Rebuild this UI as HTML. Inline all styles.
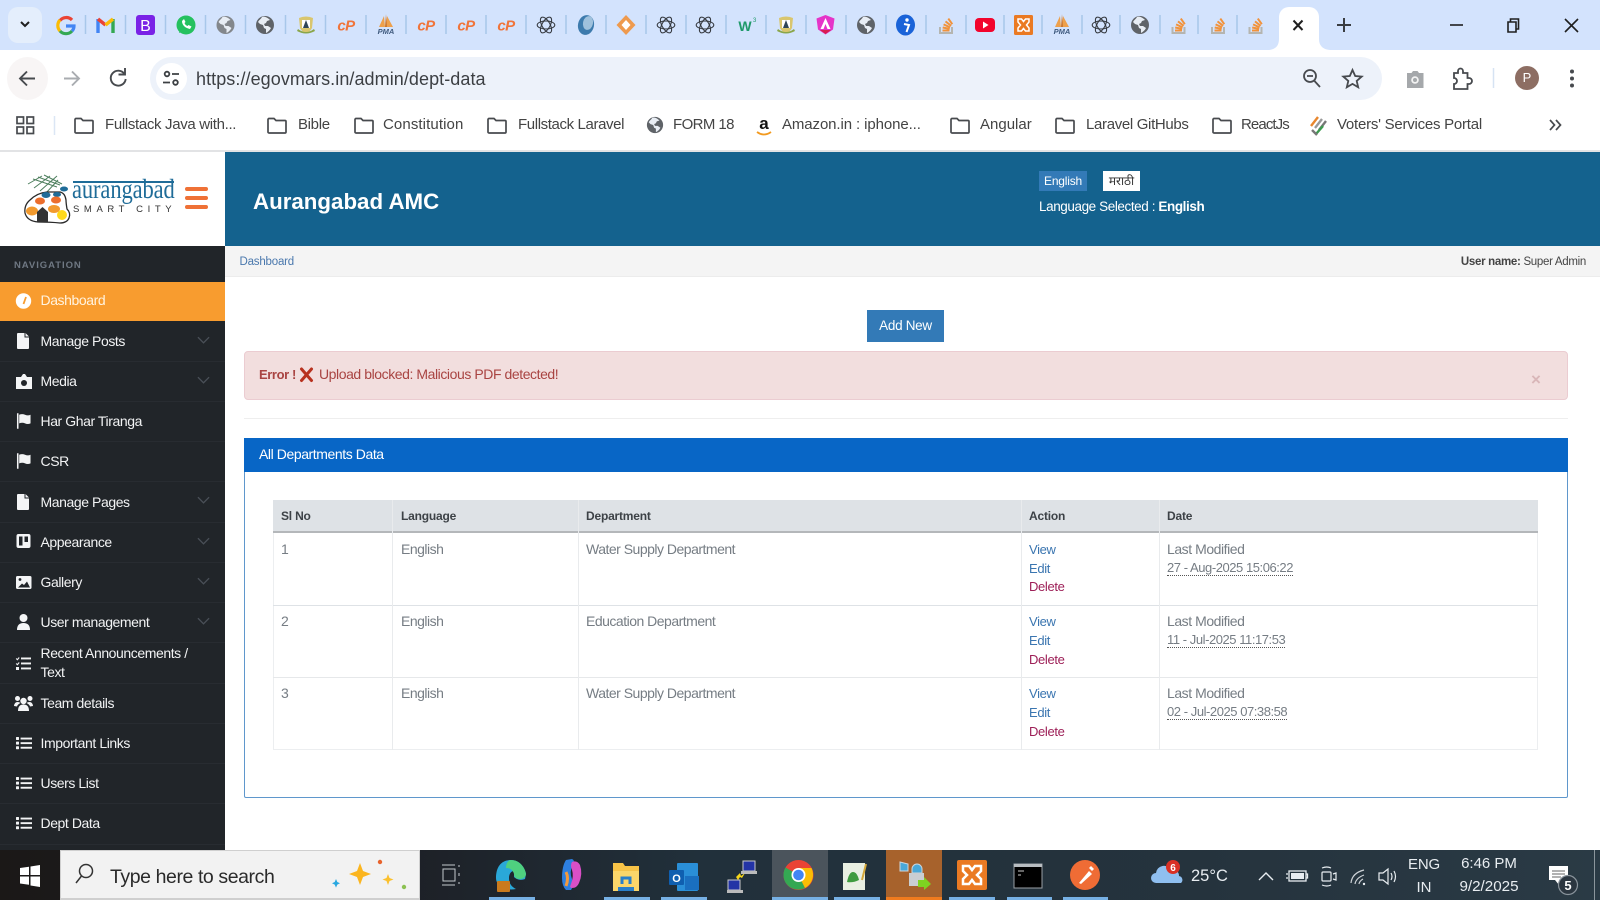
<!DOCTYPE html>
<html lang="en"><head><meta charset="utf-8"><title>Dept Data</title>
<style>
*{box-sizing:border-box;margin:0;padding:0}
html,body{width:1600px;height:900px;overflow:hidden;background:#fff;font-family:"Liberation Sans",Arial,sans-serif}
#p{position:relative;width:1600px;height:900px;overflow:hidden}
.a{position:absolute}
.t{position:absolute;white-space:nowrap;line-height:20px;height:20px}
.bm{font-size:15px;color:#444;top:115px;letter-spacing:-.33px}
.nav{font-size:14px;color:#f2f3f4;left:40.5px;letter-spacing:-.42px}
.sep{position:absolute;left:0;width:225px;height:1px;background:#282c31}
.td{font-size:14px;color:#767d84;letter-spacing:-.5px}
.th{font-size:12px;font-weight:bold;color:#3d4247;letter-spacing:-.2px}
.lk{font-size:13px;color:#3a75b0;left:1029px;letter-spacing:-.35px}
.dl{font-size:13px;color:#9d1f57;left:1029px;letter-spacing:-.35px}
.dt{font-size:14px;color:#767d84;left:1167px;letter-spacing:-.45px}
.ds{font-size:13px;color:#767d84;left:1167px;letter-spacing:-.45px}
.ds span{border-bottom:1px dotted #555;display:inline-block;line-height:15px}
.tb{color:#e8edf1}
svg.o{position:absolute;left:0;top:0;z-index:5}
</style></head><body><div id="p">

<!-- browser chrome -->
<div class="a" style="left:0;top:0;width:1600px;height:50px;background:#d3e3fd"></div>
<div class="a" style="left:8px;top:7px;width:34px;height:36px;border-radius:10px;background:#e4eefc"></div>
<div class="a" style="left:0;top:50px;width:1600px;height:102px;background:#fff;border-radius:10px 10px 0 0"></div>
<div class="a" style="left:1279px;top:7px;width:40px;height:44px;background:#fff;border-radius:10px 10px 0 0"></div>
<div class="a" style="left:7px;top:57px;width:41px;height:43px;border-radius:50%;background:#f8f5f5"></div>
<div class="a" style="left:150px;top:57px;width:1232px;height:43px;border-radius:22px;background:#edf2fa"></div>
<div class="a" style="left:156px;top:63px;width:31px;height:31px;border-radius:50%;background:#fff"></div>
<div class="t" style="left:196px;top:69px;font-size:18px;color:#3c3f43;letter-spacing:.07px">https://egovmars.in/admin/dept-data</div>
<div class="a" style="left:0;top:150px;width:1600px;height:2px;background:#e2e3e5"></div>
<div class="a" style="left:1515px;top:66px;width:24px;height:24px;border-radius:50%;background:#8d6e63;color:#fff;font-size:13px;line-height:24px;text-align:center">P</div>

<div class="t bm" style="left:105px">Fullstack Java with...</div>
<div class="t bm" style="left:298px">Bible</div>
<div class="t bm" style="left:383px;letter-spacing:.1px">Constitution</div>
<div class="t bm" style="left:518px;letter-spacing:-.38px">Fullstack Laravel</div>
<div class="t bm" style="left:673px;letter-spacing:-.6px">FORM 18</div>
<div class="t bm" style="left:782px;letter-spacing:-.1px">Amazon.in : iphone...</div>
<div class="t bm" style="left:980px;letter-spacing:0">Angular</div>
<div class="t bm" style="left:1086px">Laravel GitHubs</div>
<div class="t bm" style="left:1241px;letter-spacing:-.9px">ReactJs</div>
<div class="t bm" style="left:1337px;letter-spacing:-.24px">Voters' Services Portal</div>

<!-- logo area -->
<div class="a" style="left:0;top:152px;width:225px;height:94px;background:#fff"></div>
<div class="t" style="left:72px;top:179px;height:24px;line-height:24px;font-family:'Liberation Serif',serif;font-size:22.5px;color:#1f6c98;letter-spacing:-.1px;transform:scaleY(1.2);transform-origin:50% 80%">aurangabad</div>
<div class="a" style="left:73px;top:181px;width:101px;height:1.5px;background:#1f6c98"></div>
<div class="t" style="left:73px;top:200px;font-size:9.5px;color:#333;letter-spacing:4.6px">SMART CITY</div>

<!-- header -->
<div class="a" style="left:225px;top:152px;width:1375px;height:94px;background:#14628e"></div>
<div class="t" style="left:253px;top:187px;height:30px;line-height:30px;font-size:22.3px;font-weight:bold;color:#fff">Aurangabad AMC</div>
<div class="a" style="left:1039px;top:171px;width:48px;height:20px;background:#337ab7;color:#fff;font-size:12px;line-height:20px;text-align:center;letter-spacing:-.2px">English</div>
<div class="a" style="left:1103px;top:171px;width:37px;height:20px;background:#fff;color:#333;font-size:12px;line-height:20px;text-align:center;font-family:'Liberation Sans','Noto Sans Devanagari','Lohit Devanagari',sans-serif">मराठी</div>
<div class="t" style="left:1039px;top:197px;font-size:13.5px;color:#fff;letter-spacing:-.41px">Language Selected : <b>English</b></div>

<!-- breadcrumb -->
<div class="a" style="left:225px;top:246px;width:1375px;height:31px;background:#f4f4f4;border-bottom:1px solid #ececec"></div>
<div class="t" style="left:239.5px;top:252px;font-size:11.5px;color:#4a78ad;letter-spacing:-.2px">Dashboard</div>
<div class="t" style="right:14px;top:252px;font-size:11.5px;color:#444;letter-spacing:-.3px"><b>User name:</b> Super Admin</div>

<!-- sidebar -->
<div class="a" style="left:0;top:246px;width:225px;height:604px;background:#212529"></div>
<div class="t" style="left:14px;top:256px;font-size:9.5px;font-weight:bold;color:#6f7883;letter-spacing:.95px">NAVIGATION</div>
<div class="a" style="left:0;top:281.500px;width:225px;height:39.500px;background:#f89c2f"></div>
<div class="sep" style="top:361px"></div><div class="sep" style="top:401px"></div><div class="sep" style="top:441px"></div><div class="sep" style="top:481px"></div><div class="sep" style="top:522px"></div><div class="sep" style="top:562px"></div><div class="sep" style="top:602px"></div><div class="sep" style="top:642px"></div><div class="sep" style="top:683px"></div><div class="sep" style="top:723px"></div><div class="sep" style="top:763px"></div><div class="sep" style="top:803px"></div><div class="sep" style="top:844px"></div>
<div class="t nav" style="top:290px;color:#fff3e0">Dashboard</div>
<div class="t nav" style="top:331px">Manage Posts</div>
<div class="t nav" style="top:371px">Media</div>
<div class="t nav" style="top:411px">Har Ghar Tiranga</div>
<div class="t nav" style="top:451px">CSR</div>
<div class="t nav" style="top:492px">Manage Pages</div>
<div class="t nav" style="top:532px">Appearance</div>
<div class="t nav" style="top:572px">Gallery</div>
<div class="t nav" style="top:612px">User management</div>
<div class="t nav" style="top:643px">Recent Announcements /</div>
<div class="t nav" style="top:662px">Text</div>
<div class="t nav" style="top:693px">Team details</div>
<div class="t nav" style="top:733px">Important Links</div>
<div class="t nav" style="top:773px">Users List</div>
<div class="t nav" style="top:813px">Dept Data</div>

<!-- main -->
<div class="a" style="left:867px;top:310px;width:77px;height:32px;background:#337ab7;color:#fff;font-size:13.5px;line-height:32px;text-align:center;letter-spacing:-.3px">Add New</div>
<div class="a" style="left:244px;top:351px;width:1324px;height:49px;background:#f2dede;border:1px solid #ebccd1;border-radius:4px"></div>
<div class="t" style="left:259px;top:365px;font-size:13px;font-weight:bold;color:#a94442;letter-spacing:-.4px">Error !</div>
<div class="t" style="left:319px;top:364px;font-size:14px;color:#a94442;letter-spacing:-.43px">Upload blocked: Malicious PDF detected!</div>
<div class="t" style="left:1531px;top:370px;font-size:17px;font-weight:bold;color:#d9b6b8">×</div>
<div class="a" style="left:244px;top:418px;width:1324px;height:1px;background:#eee"></div>

<div class="a" style="left:244px;top:438px;width:1324px;height:360px;border:1px solid #5f97cc;border-radius:2px"></div>
<div class="a" style="left:244px;top:438px;width:1324px;height:34px;background:#0866c6"></div>
<div class="t" style="left:259px;top:444px;font-size:14px;color:#fff;letter-spacing:-.42px">All Departments Data</div>

<div class="a" style="left:273px;top:500px;width:1265px;height:33px;background:#dee2e6;border-bottom:2px solid #b4b7ba"></div>
<div class="a" style="left:273px;top:533px;width:1265px;height:217px;border:1px solid #eceef0;border-top:0"></div>
<div class="a" style="left:273px;top:605px;width:1265px;height:1px;background:#dee2e6"></div>
<div class="a" style="left:273px;top:677px;width:1265px;height:1px;background:#e6e8ea"></div>
<div class="a" style="left:392px;top:500px;width:1px;height:250px;background:#e9ebed"></div>
<div class="a" style="left:578px;top:500px;width:1px;height:250px;background:#e9ebed"></div>
<div class="a" style="left:1021px;top:500px;width:1px;height:250px;background:#e9ebed"></div>
<div class="a" style="left:1159px;top:500px;width:1px;height:250px;background:#e9ebed"></div>
<div class="t th" style="left:281px;top:506px">Sl No</div>
<div class="t th" style="left:401px;top:506px">Language</div>
<div class="t th" style="left:586px;top:506px">Department</div>
<div class="t th" style="left:1029px;top:506px">Action</div>
<div class="t th" style="left:1167px;top:506px">Date</div>

<div class="t td" style="left:281px;top:539px">1</div><div class="t td" style="left:401px;top:539px">English</div><div class="t td" style="left:586px;top:539px">Water Supply Department</div>
<div class="t lk" style="top:540px">View</div><div class="t lk" style="top:559px">Edit</div><div class="t dl" style="top:577px">Delete</div>
<div class="t dt" style="top:539px">Last Modified</div><div class="t ds" style="top:558px"><span>27 - Aug-2025 15:06:22</span></div>

<div class="t td" style="left:281px;top:611px">2</div><div class="t td" style="left:401px;top:611px">English</div><div class="t td" style="left:586px;top:611px">Education Department</div>
<div class="t lk" style="top:612px">View</div><div class="t lk" style="top:631px">Edit</div><div class="t dl" style="top:650px">Delete</div>
<div class="t dt" style="top:611px">Last Modified</div><div class="t ds" style="top:630px"><span>11 - Jul-2025 11:17:53</span></div>

<div class="t td" style="left:281px;top:683px">3</div><div class="t td" style="left:401px;top:683px">English</div><div class="t td" style="left:586px;top:683px">Water Supply Department</div>
<div class="t lk" style="top:684px">View</div><div class="t lk" style="top:703px">Edit</div><div class="t dl" style="top:722px">Delete</div>
<div class="t dt" style="top:683px">Last Modified</div><div class="t ds" style="top:702px"><span>02 - Jul-2025 07:38:58</span></div>

<!-- taskbar -->
<div class="a" style="left:0;top:850px;width:1600px;height:50px;background:linear-gradient(90deg,#1b1817 0,#1d2026 400px,#21303b 700px,#25333d 1200px,#2a3a45 1600px)"></div>
<div class="a" style="left:60px;top:850px;width:360px;height:50px;background:#f2f2f2;border:1px solid #cfcfcf;border-bottom-width:2px"></div>
<div class="t" style="left:110px;top:865px;height:24px;line-height:24px;font-size:19.5px;color:#2a2a2a;letter-spacing:-.42px">Type here to search</div>
<div class="a" style="left:772px;top:850px;width:56px;height:50px;background:#4b545c"></div>
<div class="a" style="left:886px;top:850px;width:56px;height:50px;background:#a7622c"></div>
<div class="a" style="left:489px;top:897px;width:46px;height:3px;background:#76b0e4"></div>
<div class="a" style="left:604px;top:897px;width:46px;height:3px;background:#76b0e4"></div>
<div class="a" style="left:661px;top:897px;width:46px;height:3px;background:#76b0e4"></div>
<div class="a" style="left:772px;top:897px;width:56px;height:3px;background:#76b0e4"></div>
<div class="a" style="left:834px;top:897px;width:46px;height:3px;background:#76b0e4"></div>
<div class="a" style="left:886px;top:897px;width:56px;height:3px;background:#f07b1e"></div>
<div class="a" style="left:949px;top:897px;width:46px;height:3px;background:#76b0e4"></div>
<div class="a" style="left:1007px;top:897px;width:45px;height:3px;background:#76b0e4"></div>
<div class="a" style="left:1063px;top:897px;width:45px;height:3px;background:#76b0e4"></div>
<div class="a" style="left:1594px;top:850px;width:1px;height:50px;background:#8b959c"></div>
<div class="t tb" style="left:1191px;top:865px;height:22px;line-height:22px;font-size:16.5px">25°C</div>
<div class="t tb" style="left:1408px;top:855px;font-size:15px;width:32px;text-align:center;letter-spacing:-.2px">ENG</div>
<div class="t tb" style="left:1408px;top:878px;font-size:15px;width:32px;text-align:center">IN</div>
<div class="t tb" style="left:1449px;top:854px;font-size:15px;width:80px;text-align:center">6:46 PM</div>
<div class="t tb" style="left:1449px;top:877px;font-size:15.2px;width:80px;text-align:center">9/2/2025</div>

<svg class="o" width="1600" height="900" viewBox="0 0 1600 900" fill="none">
<defs>
<symbol id="globe" viewBox="0 0 20 20"><circle cx="10" cy="10" r="9" fill="#5f6368"/><path d="M7 2c-1 2-3 3-4 5l2 2 3 1 1 3 2 1v4c2-1 4-3 5-5l-3-2-3 0-1-2 2-1 1-2 3-1C12 2 9 1 7 2z" fill="#e8edf4"/></symbol>
<symbol id="glb2" viewBox="0 0 20 20"><circle cx="10" cy="10" r="9" fill="#83878c"/><path d="M7 2c-1 2-3 3-4 5l2 2 3 1 1 3 2 1v4c2-1 4-3 5-5l-3-2-3 0-1-2 2-1 1-2 3-1C12 2 9 1 7 2z" fill="#e8edf4"/></symbol>
<symbol id="gpt" viewBox="0 0 20 20"><g stroke="#33373d" stroke-width="1.050"><ellipse cx="10" cy="10" rx="8.800" ry="4"/><ellipse cx="10" cy="10" rx="8.800" ry="4" transform="rotate(60 10 10)"/><ellipse cx="10" cy="10" rx="8.800" ry="4" transform="rotate(120 10 10)"/></g></symbol>
<symbol id="so" viewBox="0 0 20 20"><path d="M4 12v6h12v-6" stroke="#b5b5b0" stroke-width="2"/><g stroke="#f1923b" stroke-width="2"><path d="M6.500 15.500h7"/><path d="M6.700 12.500l7 1.400"/><path d="M7.600 9.400l6.500 3"/><path d="M9.500 6.400l5.600 4.400"/><path d="M12.300 3.600l4 5.600"/></g></symbol>
<symbol id="crest" viewBox="0 0 20 20"><path d="M3 3q7-3 14 0l-1 10q-2 4-6 5-4-1-6-5z" fill="#d9c66e"/><path d="M6 5h8v8H6z" fill="#fff"/><path d="M10 5l3 8H7z" fill="#2f4558"/><path d="M2 14q8 6 16 0l1 2q-9 5-18 0z" fill="#8aa64a"/></symbol>
<symbol id="pma" viewBox="0 0 20 20"><path d="M3 14L8 3l1 11zM10 14l1-11 6 11z" fill="#eda04c"/><path d="M9 14L10 1l1 13z" fill="#c9742c"/></symbol>
<symbol id="fold" viewBox="0 0 20 20"><path d="M1 4.500a1 1 0 0 1 1-1h5l2 2h9a1 1 0 0 1 1 1V17a1 1 0 0 1-1 1H2a1 1 0 0 1-1-1z" stroke="#474a4e" stroke-width="1.700"/></symbol>
<symbol id="list" viewBox="0 0 16 16"><g fill="#f2f3f4"><rect x="0" y="2" width="3" height="3" rx=".6"/><rect x="0" y="6.600" width="3" height="3" rx=".6"/><rect x="0" y="11.200" width="3" height="3" rx=".6"/><rect x="4.600" y="2.600" width="11.400" height="1.900"/><rect x="4.600" y="7.200" width="11.400" height="1.900"/><rect x="4.600" y="11.800" width="11.400" height="1.900"/></g></symbol>
<symbol id="doc" viewBox="0 0 14 16"><path d="M1.500 0H8v4.500h4.500V15a1 1 0 0 1-1 1h-10a1 1 0 0 1-1-1V1a1 1 0 0 1 1-1zM9 0l3.500 3.500H9z" fill="#f4f5f6"/></symbol>
<symbol id="flag" viewBox="0 0 16 16"><path d="M1 0h1.600v16H1z" fill="#f4f5f6"/><path d="M3.300 1.500q3-1.300 6 0t5.700 0v9q-3 1.300-5.700 0t-6 0z" fill="#f4f5f6"/></symbol>
<symbol id="chev" viewBox="0 0 14 8"><path d="M1 1l6 6 6-6" stroke="#4a5058" stroke-width="1.400"/></symbol>
</defs>

<!-- tab strip -->
<path d="M21 22l4 4 4-4" stroke="#1f1f1f" stroke-width="2"/>
<g stroke="#a8c7ea" stroke-width="1.500"><path d="M85.500 15v19M125.500 15v19M165.500 15v19M205.500 15v19M245.500 15v19M285.500 15v19M325.500 15v19M366 15v19M406 15v19M446 15v19M486 15v19M526 15v19M566 15v19M606 15v19M646 15v19M686 15v19M726 15v19M766 15v19M806 15v19M846 15v19M886 15v19M926 15v19M966 15v19M1004 15v19M1042 15v19M1082 15v19M1120 15v19M1160 15v19M1198 15v19M1237 15v19"/></g>
<!-- G -->
<g transform="translate(56 15.500)" stroke-width="3.200" fill="none"><path d="M16 4.500A8 8 0 0 0 4 5" stroke="#ea4335"/><path d="M4 4.500a8 8 0 0 0 0 11" stroke="#fbbc05"/><path d="M4 15.500a8 8 0 0 0 12 0" stroke="#34a853"/><path d="M16 15.500q2-2 2-5H10" stroke="#4285f4"/></g>
<!-- M -->
<g transform="translate(96 16)" fill="none" stroke-width="3.400"><path d="M2 17V3" stroke="#4285f4"/><path d="M17 17V3" stroke="#34a853"/><path d="M2 3l7.500 6" stroke="#ea4335"/><path d="M9.500 9L17 3" stroke="#fbbc05"/></g>
<rect x="136" y="15" width="19" height="20" rx="3" fill="#7a22e6"/><text x="145.500" y="31" font-size="16" font-family="Liberation Sans" fill="#fff" text-anchor="middle">B</text>
<circle cx="186" cy="25" r="9.500" fill="#25c15f"/><path d="M179 33l1.500-5 4 3z" fill="#25c15f"/><path d="M182 21c0 4 3 7 8 8l1.500-2.500-3-1.500-1 1c-1.500-.5-2.500-1.500-3-3l1-1-1.500-3z" fill="#fff"/>
<use href="#glb2" x="215.500" y="15" width="20" height="20"/>
<use href="#globe" x="255" y="15" width="20" height="20"/>
<use href="#crest" x="296" y="15" width="20" height="20"/>
<g font-family="Liberation Sans" font-weight="bold" font-style="italic" font-size="15" letter-spacing="-.5" fill="#f0743a" text-anchor="middle"><text x="346" y="30.500">cP</text><text x="426" y="30.500">cP</text><text x="466" y="30.500">cP</text><text x="506" y="30.500">cP</text></g>
<use href="#pma" x="376" y="13" width="20" height="20"/><text x="386" y="34" font-size="7.500" font-weight="bold" font-style="italic" font-family="Liberation Sans" fill="#3f5a7e" text-anchor="middle">PMA</text>
<use href="#pma" x="1052" y="13" width="20" height="20"/><text x="1062" y="34" font-size="7.500" font-weight="bold" font-style="italic" font-family="Liberation Sans" fill="#3f5a7e" text-anchor="middle">PMA</text>
<use href="#gpt" x="536" y="15" width="20" height="20"/><use href="#gpt" x="656" y="15" width="20" height="20"/><use href="#gpt" x="695" y="15" width="20" height="20"/><use href="#gpt" x="1091" y="15" width="20" height="20"/>
<ellipse cx="586" cy="25" rx="8" ry="10" transform="rotate(12 586 25)" fill="#3d7bad"/><ellipse cx="588" cy="23" rx="5" ry="7" transform="rotate(12 588 23)" fill="#9fc1dc"/>
<path d="M626 15l9.500 10-9.500 10-9.500-10z" fill="#ee9a4e"/><path d="M626 20l4.500 5-4.500 5-4.500-5z" fill="#fff"/>
<text x="745" y="31" font-size="14" font-weight="bold" font-family="Liberation Sans" fill="#1f9a6a" text-anchor="middle">W</text><text x="753" y="22" font-size="6" font-family="Liberation Sans" fill="#1f9a6a">3</text>
<use href="#crest" x="776" y="15" width="20" height="20"/>
<path d="M825.500 15l9 3.500-1.500 11-7.500 5-7.500-5-1.500-11z" fill="#e534c8"/><path d="M825.500 18l-5 11h3l2-5 2 5h3z" fill="#fff"/><path d="M820 30l5.500 4 5.500-4z" fill="#d71f4f"/>
<use href="#globe" x="856" y="15" width="20" height="20"/>
<ellipse cx="905.500" cy="25" rx="9.500" ry="10.500" fill="#1a63d8"/><circle cx="907" cy="20" r="1.700" fill="#fff"/><path d="M904 24l5 1-2.500 7" stroke="#fff" stroke-width="2"/>
<use href="#so" x="936" y="15" width="20" height="20"/><use href="#so" x="1168.500" y="15" width="20" height="20"/><use href="#so" x="1208" y="15" width="20" height="20"/><use href="#so" x="1245.500" y="15" width="20" height="20"/>
<rect x="975" y="18" width="20" height="14" rx="4" fill="#f2042c"/><path d="M983 21.500l5.500 3.500-5.500 3.500z" fill="#fff"/>
<rect x="1014" y="15" width="19" height="20" rx="1.500" fill="#ea7a23"/><path d="M1018 19h3.500l2 2.500 2-2.500h3.500v3l-2.500 3 2.500 3v3h-3.500l-2-2.500-2 2.500H1018v-3l2.500-3-2.500-3z" stroke="#fff" stroke-width="1.500"/>
<use href="#globe" x="1130" y="15" width="20" height="20"/>
<path d="M1293.500 20.500l9 9.500M1302.500 20.500l-9 9.500" stroke="#1f1f1f" stroke-width="2"/>
<path d="M1344 18v14M1337 25h14" stroke="#3a3d42" stroke-width="2"/>
<path d="M1450 25h13" stroke="#1f1f1f" stroke-width="1.600"/>
<path d="M1508 22h8v10h-8zM1510.500 22v-3h8v10h-2.500" stroke="#1f1f1f" stroke-width="1.600"/>
<path d="M1565 19l13 13M1578 19l-13 13" stroke="#1f1f1f" stroke-width="1.600"/>
<path d="M1269 50q10-1 10-11v11zM1330 50q-11-1-11-11v11z" fill="#fff"/>

<!-- toolbar -->
<path d="M35 78.500H20M27 71.500l-7 7 7 7" stroke="#474a4e" stroke-width="1.900"/>
<path d="M79 78.500H64M72 71.500l7 7-7 7" stroke="#a9acb0" stroke-width="1.900"/>
<path d="M124.500 74a7.500 7.500 0 1 0 1.200 5M125 68v6.500h-6.500" stroke="#474a4e" stroke-width="1.900"/>
<g stroke="#3c4043" stroke-width="1.800"><circle cx="167" cy="74" r="2.300"/><path d="M172 74h7M163 82.500h7"/><circle cx="175.500" cy="82.500" r="2.300"/></g>
<circle cx="1310" cy="76" r="6" stroke="#474a4e" stroke-width="1.800"/><path d="M1307 76h6M1314.500 81l5.500 6" stroke="#474a4e" stroke-width="1.800"/>
<path d="M1352.500 70l2.700 6 6.500.6-5 4.300 1.500 6.400-5.700-3.400-5.700 3.400 1.500-6.400-5-4.300 6.500-.6z" stroke="#474a4e" stroke-width="1.800"/>
<path d="M1407 73h4.500l1.500-2h4.500l1.500 2h4.500v15h-16.500z" fill="#a5a8ab"/><circle cx="1415" cy="80" r="3.800" fill="#f3f3f3"/><circle cx="1415" cy="80" r="2" fill="#a5a8ab"/>
<path d="M1454 73h4v-2a2.500 2.500 0 0 1 5 0v2h4.500v5h1.500a3 3 0 0 1 0 6h-1.500v5h-13.500v-5a3 3 0 0 0 0-6z" stroke="#474a4e" stroke-width="1.800"/>
<path d="M1493.500 68v20" stroke="#d6e3f3" stroke-width="1.500"/>
<g fill="#474a4e"><circle cx="1572" cy="71.500" r="2"/><circle cx="1572" cy="78.500" r="2"/><circle cx="1572" cy="85.500" r="2"/></g>

<!-- bookmarks -->
<g stroke="#474a4e" stroke-width="1.700"><rect x="17" y="117" width="6.500" height="6.500"/><rect x="27" y="117" width="6.500" height="6.500"/><rect x="17" y="127" width="6.500" height="6.500"/><rect x="27" y="127" width="6.500" height="6.500"/></g>
<path d="M54.500 116v19" stroke="#dbe6f5" stroke-width="1.500"/>
<use href="#fold" x="74" y="115" width="20" height="20"/><use href="#fold" x="267" y="115" width="20" height="20"/><use href="#fold" x="354" y="115" width="20" height="20"/><use href="#fold" x="487" y="115" width="20" height="20"/><use href="#fold" x="950" y="115" width="20" height="20"/><use href="#fold" x="1055" y="115" width="20" height="20"/><use href="#fold" x="1212" y="115" width="20" height="20"/>
<use href="#globe" x="646" y="116" width="18" height="18"/>
<text x="764" y="129" font-size="17" font-weight="bold" font-family="Liberation Sans" fill="#111" text-anchor="middle">a</text><path d="M757 132q7 5 14 0" stroke="#f29a1f" stroke-width="1.800"/>
<g stroke-width="2.400"><path d="M1311 126l7-9" stroke="#e8872e"/><path d="M1315 128l7-9" stroke="#999"/><path d="M1319 130l7-9" stroke="#777"/><path d="M1316 134l7-8" stroke="#3d9a4f"/><path d="M1312 130l5 5" stroke="#777"/></g>
<path d="M1550 120l4.500 5-4.500 5M1556 120l4.500 5-4.500 5" stroke="#474a4e" stroke-width="1.700"/>

<!-- logo -->
<g stroke="#4e7f5e" stroke-width="1"><path d="M33 179l24 8M38 177l22 8M44 175l18 9M28 184l14-8M34 188l16-12M40 191l17-15M46 193l12-13"/></g>
<path d="M47 192q-10 1-17 8-6 5-5 13 2 8 13 9 13 0 22 1 7 0 9-5 2-5-2-9-1-6-1-9-1-7-6-8z" fill="#fff" stroke="#2a2a2a" stroke-width="1.300"/>
<g><ellipse cx="46" cy="195" rx="4.500" ry="3" fill="#1f6c98"/><ellipse cx="57" cy="194.500" rx="4" ry="2.500" fill="#1f6c98"/><ellipse cx="64" cy="189" rx="4" ry="2.500" fill="#1f6c98"/><ellipse cx="40" cy="201" rx="5" ry="3.500" fill="#ec6e2c"/><ellipse cx="56" cy="200" rx="5" ry="3.500" fill="#ec6e2c"/><ellipse cx="32" cy="211" rx="6" ry="4.500" fill="#f29a2e"/><ellipse cx="54" cy="209" rx="6" ry="4" fill="#f29a2e"/><circle cx="62" cy="215" r="5" fill="#ffd91a"/></g>
<path d="M37 222v-10l5.500-5 5.500 5v10z" fill="#333"/>
<path d="M187 189h19M187 198h19M187 207h19" stroke="#ef7136" stroke-width="4" stroke-linecap="round"/>

<!-- sidebar icons -->
<circle cx="23.500" cy="301" r="7.700" fill="#fff"/><path d="M26 297l-2.500 7" stroke="#f89c2f" stroke-width="1.800"/>
<use href="#doc" x="16.500" y="333" width="14" height="16"/><use href="#doc" x="16.500" y="494" width="14" height="16"/>
<path d="M16 376h5l2-3h2l2 3h5v12H16z" fill="#f4f5f6" transform="translate(0 1)"/><circle cx="24" cy="383" r="3" fill="#212529"/>
<use href="#flag" x="16" y="413" width="15.500" height="16"/><use href="#flag" x="16" y="453" width="15.500" height="16"/>
<rect x="16.500" y="534" width="14" height="14" rx="2" fill="#f4f5f6"/><path d="M19 536.500h3.500v9H19zM24.500 536.500H28v5.500h-3.500z" fill="#212529"/>
<rect x="16" y="576" width="15.500" height="13" rx="1.500" fill="#f4f5f6"/><circle cx="20" cy="579.500" r="1.400" fill="#212529"/><path d="M18 587.500l4-4 2 1.500 3-3.500 3 6z" fill="#212529"/>
<circle cx="23.500" cy="618" r="4" fill="#f4f5f6"/><path d="M17 630q0-7 6.500-7t6.500 7z" fill="#f4f5f6"/>
<g fill="#f2f3f4"><rect x="21" y="657.500" width="10" height="1.900"/><rect x="21" y="662.500" width="10" height="1.900"/><rect x="21" y="667.500" width="10" height="1.900"/><rect x="16" y="667" width="3" height="3"/></g><path d="M16.200 658.500l1.200 1.200 1.800-2.200M16.200 663.500l1.200 1.200 1.800-2.200" stroke="#f2f3f4" stroke-width="1.100"/>
<g fill="#f4f5f6"><circle cx="23.500" cy="701" r="3.200"/><circle cx="17.500" cy="698.500" r="2.500"/><circle cx="30" cy="698.500" r="2.500"/><path d="M18 711q0-6.500 5.500-6.500t5.500 6.500z"/><path d="M14 706q.5-4 3.500-4 2 0 3 1-3 1.500-3.500 3.500zM33 706q-.5-4-3.500-4-2 0-3 1 3 1.500 3.500 3.500z"/></g>
<use href="#list" x="16" y="735" width="16" height="16"/><use href="#list" x="16" y="775" width="16" height="16"/><use href="#list" x="16" y="815" width="16" height="16"/>
<use href="#chev" x="197" y="336" width="13" height="8"/><use href="#chev" x="197" y="376" width="13" height="8"/><use href="#chev" x="197" y="496" width="13" height="8"/><use href="#chev" x="197" y="537" width="13" height="8"/><use href="#chev" x="197" y="577" width="13" height="8"/><use href="#chev" x="197" y="617" width="13" height="8"/>

<!-- alert X -->
<path d="M301.500 369l10 11.500M311.500 369l-10 11.500" stroke="#b8321f" stroke-width="3" stroke-linecap="round"/>

<!-- taskbar icons -->
<path d="M20 868l9-1.300v8.300h-9zM30.500 866.500l9.500-1.500v10h-9.500zM20 876.500h9v8.300l-9-1.300zM30.500 876.500H40V887l-9.500-1.500z" fill="#fff"/>
<circle cx="86" cy="871" r="6.500" stroke="#333" stroke-width="1.500"/><path d="M81.500 876l-5.500 7" stroke="#333" stroke-width="1.500"/>
<path d="M360 863l3 8 8 3-8 3-3 8-3-8-8-3 8-3z" fill="#fbb51f"/><path d="M388 874l1.500 4 4 1.500-4 1.500-1.500 4-1.500-4-4-1.500 4-1.500z" fill="#fbc02d"/><path d="M336 879l1.300 3 2.700 1.300-2.700 1.300-1.300 3-1.300-3-2.700-1.300 2.700-1.300z" fill="#29a8e0"/><circle cx="380" cy="862" r="2.200" fill="#e8632c"/><circle cx="404" cy="887" r="2.200" fill="#8cc152"/>
<g stroke="#c4c9cd" stroke-width="1"><rect x="443" y="869" width="12" height="12"/><path d="M442 865h13M442 885h13M459 865v2M459 873v3M459 882v2"/></g>
<path d="M496 878c0-12 6-18 15-18 9 0 14 8 15 14l-1 5c-5 2-9 0-11-2v-6c-3 0-5 3-5 7 0 6 3 9 7 11-11 2-20-3-20-11z" fill="#2aa8d8"/><path d="M511 860c9 0 14 8 15 14 0 3-3 5-6 5-4 0-6-2-6-5-1-4-4-6-8-6 0-4 2-8 5-8z" fill="#4fd07f"/><rect x="497" y="881" width="13" height="11" rx="1" fill="#c97a1d"/>
<path d="M566 860l6-1q3 1 1 5-4 8-1 15 2 7-1 11h-5q-4-4-4-12 0-12 4-18z" fill="#2d7fe0"/><path d="M572 862q5-2 8 3 3 9-1 18-2 5-7 5-3 0-1-4 3-8 1-14-2-5 0-8z" fill="#d94fc7"/><path d="M566 872q3 6 0 14" stroke="#f49a3c" stroke-width="3"/>
<path d="M613 863h10l2 3h14v25h-26z" fill="#f7c347"/><path d="M613 871h26v20h-26z" fill="#fbd66a"/><path d="M622 884v-6h8v6" stroke="#2a7fc9" stroke-width="3"/><rect x="618" y="887" width="16" height="4" fill="#2a7fc9"/>
<rect x="677" y="863" width="21" height="28" rx="1" fill="#2a8fd8"/><rect x="685" y="876" width="14" height="14" fill="#1a6fc0"/><rect x="669" y="870" width="15" height="15" rx="1" fill="#0f5fb0"/><text x="676.500" y="882" font-size="11" font-weight="bold" font-family="Liberation Sans" fill="#fff" text-anchor="middle">O</text>
<g><rect x="743" y="861" width="12" height="10" fill="#2434a6" stroke="#c8c8c8"/><rect x="728" y="880" width="12" height="10" fill="#2434a6" stroke="#c8c8c8"/><path d="M736 877l4-4 1 3 4-3-3 5-2-1-2 3z" fill="#f6d619"/><rect x="741" y="871" width="16" height="3" fill="#bbb"/><rect x="727" y="890" width="16" height="3" fill="#bbb"/></g>
<circle cx="798.500" cy="875" r="15" fill="#ea4335"/><path d="M785.500 882.500a15 15 0 0 1 0-15L798.500 875l-6.500 13.300z" fill="#34a853"/><path d="M798.500 875l6.500 13a15 15 0 0 1-19.500-5.500z" fill="#34a853"/><path d="M798.500 868h13a15 15 0 0 1-6.500 20l-6.500-13z" fill="#fbbc05"/><circle cx="798.500" cy="875" r="7" fill="#fff"/><circle cx="798.500" cy="875" r="5.300" fill="#4285f4"/>
<rect x="843" y="863" width="22" height="27" fill="#e9efe2"/><path d="M847 882q2-10 6-10 4 0 6 8-6 3-12 2z" fill="#3f9b3f"/><path d="M866 864l-4 16" stroke="#d4a73a" stroke-width="2"/>
<path d="M900 862l8 2v7h-8zM912 873h10v-4a5 5 0 0 0-10 0z" fill="#49a8d8" stroke="#cdd6dc"/><rect x="909" y="873" width="15" height="13" fill="#c9ced2"/><path d="M917 880h6v-3l7 7-7 6v-3h-6z" fill="#7ed321" transform="translate(1 0)"/>
<rect x="957" y="860" width="30" height="30" rx="2" fill="#ea7a23"/><path d="M963 866h6l3 4 3-4h6v5l-4 4 4 4v5h-6l-3-4-3 4h-6v-5l4-4-4-4z" stroke="#fff" stroke-width="2.500"/>
<rect x="1014" y="864" width="28" height="24" fill="#000" stroke="#9aa0a6"/><rect x="1014" y="864" width="28" height="3" fill="#b8bdc1"/><path d="M1018 871h6M1018 875h3" stroke="#ccc" stroke-width="1"/>
<circle cx="1085" cy="875" r="15" fill="#ef6c35"/><path d="M1079 883l10-12 3 3-11 10z" fill="#fff"/><path d="M1091 866l3 3-2 2-3-3z" fill="#fff"/>
<!-- tray -->
<path d="M1156 883a5 5 0 0 1 0-10 8 8 0 0 1 15-3 6 6 0 0 1 8 6 4 4 0 0 1 2 7z" fill="#8fbff0"/>
<circle cx="1173" cy="867" r="7" fill="#d93025"/><text x="1173" y="871" font-size="10" font-weight="bold" font-family="Liberation Sans" fill="#fff" text-anchor="middle">6</text>
<path d="M1259 880l7-7 7 7" stroke="#e8edf1" stroke-width="1.400"/>
<g stroke="#e8edf1" stroke-width="1.300"><rect x="1289" y="871" width="17" height="10"/><path d="M1306 874h1.500v4H1306M1288 874h-2M1288 878h-2"/></g><rect x="1291" y="873" width="13" height="6" fill="#e8edf1"/>
<g stroke="#e8edf1" stroke-width="1.200"><rect x="1322" y="872" width="9" height="9" rx="1"/><path d="M1333 874l3-1v7l-3-1M1322 868q5-2 9 0M1322 885q5 2 9 0"/></g>
<g stroke="#cfd4d8" stroke-width="1.200"><path d="M1351 883q1-10 13-13M1355 884q1-6 9-9M1359 884q.5-3 4-5"/></g><circle cx="1364" cy="884" r="1.200" fill="#e8edf1"/>
<g stroke="#e8edf1" stroke-width="1.200"><path d="M1379 873h4l5-4v15l-5-4h-4z"/><path d="M1391 873q2 3.500 0 7M1394 871q3 5.500 0 11"/></g>
<path d="M1549 866h19v14h-8l-1 5-4-5h-6z" fill="#fff"/><path d="M1552 871h13M1552 874h13M1552 877h9" stroke="#666"/>
<circle cx="1568" cy="885" r="9.500" fill="#2b3640" stroke="#8a949c" stroke-width="1.200"/><text x="1568" y="890" font-size="13" font-weight="bold" font-family="Liberation Sans" fill="#fff" text-anchor="middle">5</text>
</svg>
</div></body></html>
